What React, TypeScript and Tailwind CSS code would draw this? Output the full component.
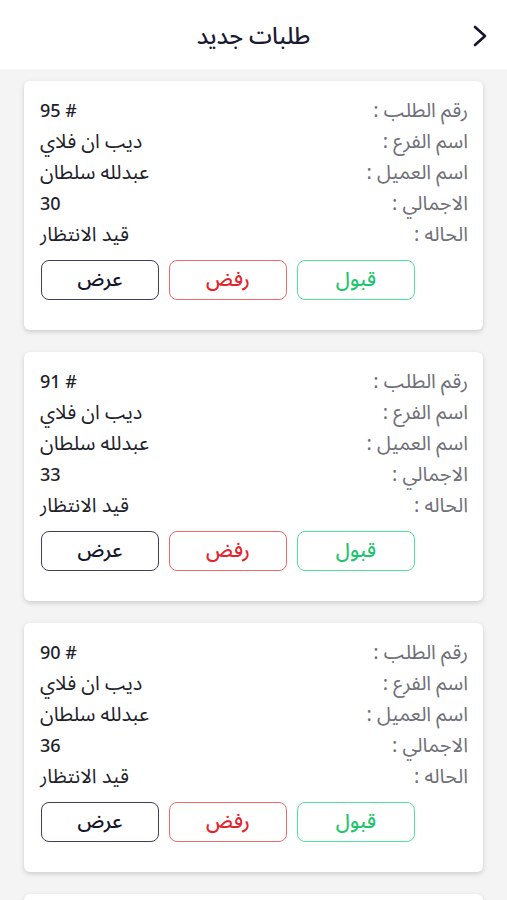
interface Order {
  id: number;
  branch: string;
  customer: string;
  total: number;
  status: string;
}

const orders: Order[] = [
  { id: 95, branch: 'ديب ان فلاي', customer: 'عبدلله سلطان', total: 30, status: 'قيد الانتظار' },
  { id: 91, branch: 'ديب ان فلاي', customer: 'عبدلله سلطان', total: 33, status: 'قيد الانتظار' },
  { id: 90, branch: 'ديب ان فلاي', customer: 'عبدلله سلطان', total: 36, status: 'قيد الانتظار' },
  { id: 89, branch: 'ديب ان فلاي', customer: 'عبدلله سلطان', total: 30, status: 'قيد الانتظار' },
];

function Row({ label, value, numeric }: { label: string; value: string; numeric?: boolean }) {
  return (
    <div className="flex items-center justify-between h-[31px]">
      <span className="text-[20px] leading-none text-[#707078]">{label}</span>
      <span className={numeric ? 'text-[18px] leading-none font-medium text-[#1f1f2b] pt-px' : 'text-[20px] leading-none text-[#1f1f2b]'}>{value}</span>
    </div>
  );
}

function OrderCard({ order }: { order: Order }) {
  return (
    <div className="bg-white rounded-md shadow-[0_2px_5px_rgba(0,0,0,0.16)] pt-[14px] pb-[30px] pr-[15px] pl-[16px]">
      <Row label="رقم الطلب :" value={`#\u00a0${order.id}`} numeric />
      <Row label="اسم الفرع :" value={order.branch} />
      <Row label="اسم العميل :" value={order.customer} />
      <Row label="الاجمالي :" value={String(order.total)} numeric />
      <Row label="الحاله :" value={order.status} />
      <div className="flex justify-end gap-[10px] mt-[10px] pl-px">
        <button className="w-[118px] h-[40px] rounded-lg border-[1.5px] border-[#52e39a] text-[#1fc46f] text-[20px] font-medium leading-none">قبول</button>
        <button className="w-[118px] h-[40px] rounded-lg border-[1.5px] border-[#ef6b6b] text-[#e5232b] text-[20px] font-medium leading-none">رفض</button>
        <button className="w-[118px] h-[40px] rounded-lg border-[1.5px] border-[#3d3d5c] text-[#15152b] text-[20px] font-medium leading-none">عرض</button>
      </div>
    </div>
  );
}

export default function App() {
  return (
    <div dir="rtl" className="h-screen bg-[#f4f4f4] overflow-hidden" style={{ fontFamily: '"Noto Sans Arabic", "Noto Sans", "DejaVu Sans", sans-serif' }}>
      <div className="relative h-[69px] bg-white flex items-center justify-center">
        <button className="absolute right-[19px] top-[25px] text-[#15152b]">
          <svg width="16" height="22" viewBox="0 0 16 22" fill="none" stroke="currentColor" strokeWidth="2.6" strokeLinecap="round" strokeLinejoin="round">
            <path d="M3 2 L13 11 L3 20" />
          </svg>
        </button>
        <h1 className="text-[23px] font-medium text-[#1a1a33] mt-1 leading-none">طلبات جديد</h1>
      </div>
      <div className="px-6 pt-3 flex flex-col gap-[22px]">
        {orders.map(o => <OrderCard key={o.id} order={o} />)}
      </div>
    </div>
  );
}
